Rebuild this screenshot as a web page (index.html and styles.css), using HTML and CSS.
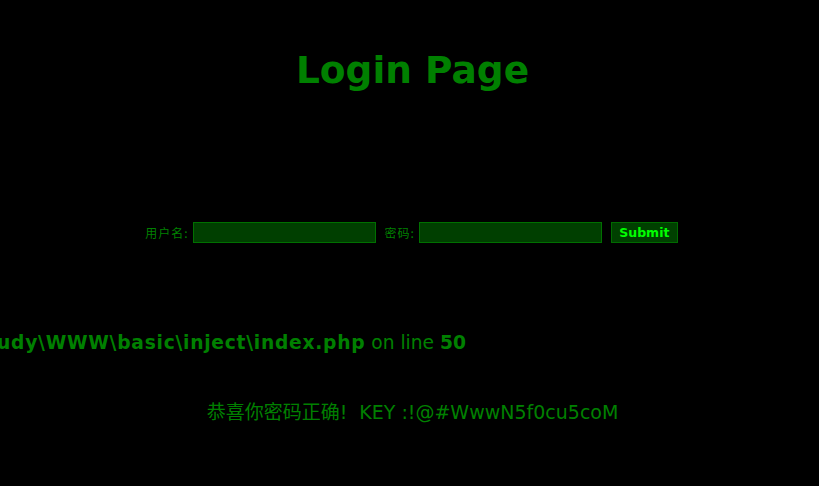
FILE: index.html
```html
<!DOCTYPE html>
<html>
<head>
<meta charset="utf-8">
<title>Login Page</title>
<link rel="stylesheet" href="styles.css">
</head>
<body>
<h1 class="title">Login Page</h1>
<form class="login">
  <label class="lbl">用户名:</label>
  <input class="field" type="text">
  <label class="lbl pw">密码:</label>
  <input class="field" type="password">
  <button class="submit" type="button">Submit</button>
</form>
<div class="error"><span class="err-text"><b>Warning</b>: mysql_fetch_array() expects parameter 1 to be resource, boolean given in <b class="path">D:\phpStudy\WWW\basic\inject\index.php</b> on line <b>50</b></span></div>
<p class="key">恭喜你密码正确!&nbsp;&nbsp;KEY :!@#WwwN5f0cu5coM</p>
</body>
</html>
```
FILE: styles.css
```css
html, body {
  margin: 0;
  padding: 0;
  background: #000;
}
body {
  font-family: "DejaVu Sans", Verdana, "Noto Sans CJK SC", sans-serif;
  font-size: 18.67px;
  color: #008000;
  overflow: hidden;
}
.title {
  margin: 0;
  padding-top: 45px;
  padding-left: 6px;
  text-align: center;
  font-size: 37.5px;
  font-weight: bold;
  line-height: 50px;
  color: #008000;
}
.login {
  margin: 127px 0 0 0;
  display: flex;
  justify-content: center;
  align-items: center;
  padding-left: 4px;
  height: 21px;
}
.lbl {
  font-family: "Noto Sans CJK SC", sans-serif;
  font-size: 12px;
  letter-spacing: 1px;
  color: #008000;
  margin-right: 4px;
}
.lbl.pw {
  margin-left: 9px;
}
.field {
  box-sizing: border-box;
  width: 183px;
  height: 21px;
  margin: 0;
  padding: 0;
  background: #003f00;
  border: 1px solid #007000;
  outline: none;
}
.submit {
  box-sizing: border-box;
  margin: 0 0 0 9px;
  width: 67px;
  height: 21px;
  padding: 0;
  background: #004000;
  border: 1px solid #006a00;
  color: #00ff00;
  font-family: "DejaVu Sans", Verdana, sans-serif;
  font-weight: bold;
  font-size: 12.5px;
}
.error {
  margin-top: 89px;
  width: 466px;
  display: flex;
  justify-content: flex-end;
  line-height: 22px;
}
.err-text {
  white-space: nowrap;
  flex-shrink: 0;
}
.path {
  letter-spacing: 0.75px;
}
.key {
  margin: 47px 0 0 0;
  text-align: center;
  line-height: 22px;
  font-size: 19px;
  font-family: "DejaVu Sans", "Noto Sans CJK SC", sans-serif;
  padding-left: 6px;
}
```
